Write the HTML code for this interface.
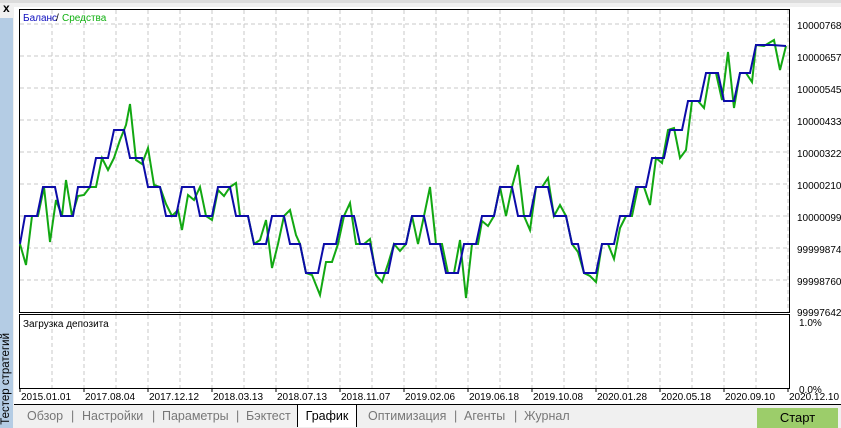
<!DOCTYPE html>
<html><head><meta charset="utf-8"><style>
body{margin:0;width:841px;height:428px;background:#f0f0f0;position:relative;overflow:hidden;font-family:"Liberation Sans","DejaVu Sans",sans-serif}
.side{position:absolute;left:0;top:18px;width:13px;height:410px;background:#b4cce4}
.side span{position:absolute;left:0;bottom:3px;width:13px;writing-mode:vertical-rl;transform:rotate(180deg);font-size:11.5px;line-height:13px;white-space:nowrap;color:#000}
.tabs{position:absolute;left:14px;top:405px;font-size:12.5px;color:#777}
.t{position:absolute;top:4px;white-space:nowrap}
.act{position:absolute;left:283px;top:0;width:58px;height:22px;background:#fff;border:1px solid #000;border-bottom:none;border-top:none;color:#000;text-align:center;line-height:22px}
.btn{position:absolute;left:757px;top:408px;width:81px;height:20px;background:#9ccd6a;text-align:center;line-height:20px;font-size:13px;color:#000}
</style></head><body>
<div style="position:absolute;left:0;top:0;width:841px;height:3px;background:#dcdcdc"></div>
<div style="position:absolute;left:3px;top:1px;font-size:12px;font-weight:bold">x</div>
<div class="side"><span>Тестер стратегий</span></div>
<svg width="841" height="405" style="position:absolute;left:0;top:0">
<rect x="14" y="7" width="827" height="398" fill="#fff"/>
<rect x="19.5" y="9.5" width="770" height="303" fill="#fff" stroke="#000"/>
<rect x="19.5" y="314.5" width="770" height="74" fill="#fff" stroke="#000"/>
<g stroke="#c8c8c8" stroke-dasharray="4,3">
<path d="M52 10V312M84 10V312M116 10V312M148 10V312M180 10V312M212 10V312M244 10V312M276 10V312M308 10V312M340 10V312M372 10V312M404 10V312M436 10V312M468 10V312M500 10V312M532 10V312M564 10V312M596 10V312M628 10V312M660 10V312M692 10V312M724 10V312M756 10V312M788 10V312"/>
<path d="M20 24H789M20 56H789M20 88H789M20 120H789M20 152H789M20 184H789M20 216H789M20 248H789M20 280H789"/>
<path d="M52 315V388M84 315V388M116 315V388M148 315V388M180 315V388M212 315V388M244 315V388M276 315V388M308 315V388M340 315V388M372 315V388M404 315V388M436 315V388M468 315V388M500 315V388M532 315V388M564 315V388M596 315V388M628 315V388M660 315V388M692 315V388M724 315V388M756 315V388"/>
</g>
<polyline fill="none" stroke="#12a812" stroke-width="2" points="20,244 26,265 32,216 38,216 44,187 50,242 56,200 62,216 66,180 72,216 78,196 84,195 90,187 96,187 102,158 108,170 114,158 120,140 126,125 130,104 136,160 142,164 148,148 154,185 160,187 166,204 172,216 178,210 182,230 188,195 194,200 200,187 206,216 212,220 218,190 224,196 230,187 236,183 240,216 248,216 254,244 260,240 266,220 272,268 278,244 284,216 290,210 296,235 300,244 306,273 312,275 320,295 326,262 332,262 338,244 344,216 350,203 356,244 364,244 370,239 376,275 382,282 388,264 394,244 400,251 406,244 412,216 418,244 424,216 430,187 436,244 442,244 448,273 454,273 460,240 466,298 472,244 478,244 482,221 488,226 494,216 500,187 506,216 512,187 518,165 524,216 530,230 536,187 542,187 548,178 554,216 560,205 566,216 572,244 578,252 584,273 590,276 596,282 602,244 608,244 614,259 620,228 626,216 632,216 638,187 644,187 650,205 656,158 662,163 668,130 674,128 680,158 686,150 692,101 698,101 704,108 710,73 716,73 722,100 728,52 734,108 740,73 746,73 752,82 756,45 764,46 774,40 780,70 786,46"/>
<polyline fill="none" stroke="#0c0ca8" stroke-width="2" points="20,244 25,216 37,216 43,187 55,187 61,216 73,216 78,187 90,187 96,158 108,158 114,130 124,130 130,158 142,158 148,187 160,187 166,216 176,216 182,187 194,187 200,216 212,216 218,187 230,187 236,216 248,216 254,244 266,244 272,216 284,216 290,244 300,244 306,273 318,273 324,244 336,244 342,216 354,216 360,244 370,244 376,273 388,273 394,244 406,244 412,216 424,216 430,244 440,244 446,273 458,273 464,244 476,244 482,216 494,216 500,187 512,187 518,216 530,216 536,187 548,187 554,216 566,216 572,244 578,244 584,273 596,273 602,244 614,244 620,216 630,216 636,187 646,187 652,158 664,158 670,130 682,130 688,101 700,101 706,73 718,73 724,101 734,101 740,73 750,73 756,45 772,45 786,46"/>
<g font-size="10" fill="#000" font-family="Liberation Sans,sans-serif">
<text x="23" y="21" fill="#1010c0">Баланс</text><text x="56" y="21" fill="#000">/</text><text x="62" y="21" fill="#10b010">Средства</text>
<text x="23" y="327">Загрузка депозита</text>
<text x="797" y="29">10000768</text><text x="797" y="61">10000657</text><text x="797" y="93">10000545</text><text x="797" y="125">10000433</text><text x="797" y="157">10000322</text><text x="797" y="189">10000210</text><text x="797" y="221">10000099</text><text x="797" y="253">99999874</text><text x="797" y="285">99998760</text><text x="797" y="316">99997642</text>
<text x="799" y="326">1.0%</text><text x="799" y="393">0.0%</text>
<text x="21" y="400">2015.01.01</text><text x="85" y="400">2017.08.04</text><text x="149" y="400">2017.12.12</text><text x="213" y="400">2018.03.13</text><text x="277" y="400">2018.07.13</text><text x="341" y="400">2018.11.07</text><text x="405" y="400">2019.02.06</text><text x="469" y="400">2019.06.18</text><text x="533" y="400">2019.10.08</text><text x="597" y="400">2020.01.28</text><text x="661" y="400">2020.05.18</text><text x="725" y="400">2020.09.10</text><text x="789" y="400">2020.12.10</text>
</g>
<g stroke="#000"><path d="M20 389v3M84 389v3M148 389v3M212 389v3M276 389v3M340 389v3M404 389v3M468 389v3M532 389v3M596 389v3M660 389v3M724 389v3M788 389v3"/></g>
</svg>
<div style="position:absolute;left:14px;top:404px;width:827px;height:1px;background:#000"></div>
<div class="tabs">
<span class="t" style="left:13px">Обзор</span><span class="t" style="left:57px">|</span>
<span class="t" style="left:68px">Настройки</span><span class="t" style="left:138px">|</span>
<span class="t" style="left:148px">Параметры</span><span class="t" style="left:222px">|</span>
<span class="t" style="left:232px">Бэктест</span>
<div class="act">График</div>
<span class="t" style="left:354px">Оптимизация</span><span class="t" style="left:440px">|</span>
<span class="t" style="left:450px">Агенты</span><span class="t" style="left:500px">|</span>
<span class="t" style="left:510px">Журнал</span>
</div>
<div class="btn">Старт</div>
</body></html>
